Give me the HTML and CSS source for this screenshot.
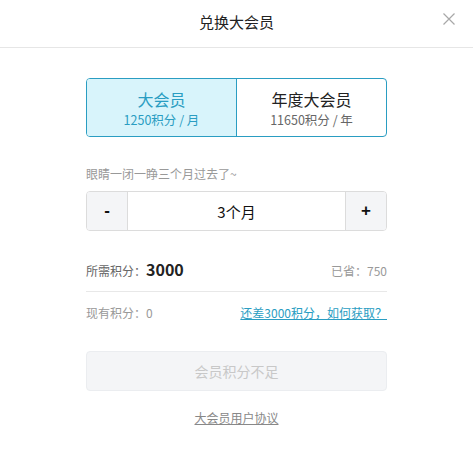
FILE: index.html
```html
<!DOCTYPE html>
<html lang="zh">
<head>
<meta charset="utf-8">
<link rel="stylesheet" href="styles.css">
</head>
<body>
<div class="dialog">
  <div class="header">
    <div class="title">兑换大会员</div>
    <svg class="close" width="12" height="12" viewBox="0 0 12 12"><path d="M0.5 0.5L11.5 11.5M11.5 0.5L0.5 11.5" stroke="#a8a8a8" stroke-width="1.2" fill="none"/></svg>
  </div>
  <div class="content">
    <div class="tabs">
      <div class="tab active">
        <div class="tab-name">大会员</div>
        <div class="tab-price">1250积分 / 月</div>
      </div>
      <div class="tab">
        <div class="tab-name">年度大会员</div>
        <div class="tab-price">11650积分 / 年</div>
      </div>
    </div>
    <div class="hint">眼睛一闭一睁三个月过去了~</div>
    <div class="stepper">
      <div class="step-btn">-</div>
      <div class="step-value">3个月</div>
      <div class="step-btn">+</div>
    </div>
    <div class="row need">
      <div class="need-label">所需积分：<span class="need-num">3000</span></div>
      <div class="saved">已省：750</div>
    </div>
    <div class="row have">
      <div class="have-label">现有积分：0</div>
      <a class="get-link">还差3000积分，如何获取？</a>
    </div>
    <div class="submit">会员积分不足</div>
    <div class="agreement"><a>大会员用户协议</a></div>
  </div>
</div>
</body>
</html>
```
FILE: styles.css
```css
html, body {
  margin: 0;
  padding: 0;
  background: #fff;
}
body {
  font-family: "Noto Sans CJK SC", "Liberation Sans", sans-serif;
  color: #222;
}
.dialog {
  width: 473px;
  height: 455px;
  position: relative;
}
.header {
  height: 47px;
  border-bottom: 1px solid #e6e6e6;
  display: flex;
  align-items: center;
  justify-content: center;
  position: relative;
}
.title {
  font-size: 15px;
  color: #222;
  line-height: 20px;
  margin-top: -4px;
}
.close {
  position: absolute;
  right: 18px;
  top: 13px;
}
.content {
  padding: 30px 86px 0;
}
.tabs {
  display: flex;
  height: 57px;
  border: 1px solid #2a9dc2;
  border-radius: 4px;
  overflow: hidden;
}
.tab {
  flex: 1;
  display: flex;
  flex-direction: column;
  align-items: center;
  justify-content: center;
}
.tab + .tab {
  border-left: 1px solid #2a9dc2;
}
.tab.active {
  background: #d8f4fb;
}
.tab-name {
  font-size: 16px;
  line-height: 22px;
  color: #222;
}
.tab-price {
  font-size: 12.5px;
  line-height: 17px;
  color: #666;
  margin-top: 1px;
}
.tab.active .tab-name,
.tab.active .tab-price {
  color: #2a9dc2;
}
.hint {
  margin-top: 28px;
  font-size: 12px;
  line-height: 18px;
  color: #999;
}
.stepper {
  margin-top: 8px;
  display: flex;
  height: 38px;
  border: 1px solid #dcdcdc;
  border-radius: 4px;
  overflow: hidden;
}
.step-btn {
  width: 40px;
  background: #f4f5f7;
  display: flex;
  align-items: center;
  justify-content: center;
  font-family: "Liberation Sans", sans-serif;
  font-weight: bold;
  font-size: 17px;
  color: #111;
}
.step-value {
  flex: 1;
  border-left: 1px solid #dcdcdc;
  border-right: 1px solid #dcdcdc;
  display: flex;
  align-items: center;
  justify-content: center;
  font-size: 15px;
  color: #111;
}
.row {
  display: flex;
  justify-content: space-between;
  align-items: baseline;
}
.need {
  margin-top: 26px;
  padding-bottom: 10px;
  border-bottom: 1px solid #e8e8e8;
}
.need-label {
  font-size: 12px;
  color: #666;
}
.need-num {
  font-size: 16px;
  font-weight: bold;
  color: #222;
}
.saved {
  font-size: 12px;
  color: #999;
}
.have {
  margin-top: 12px;
  font-size: 12px;
}
.have-label {
  color: #999;
}
.get-link {
  color: #2a9dc2;
  text-decoration: underline;
}
.submit {
  margin-top: 30px;
  height: 38px;
  border: 1px solid #ebedf0;
  border-radius: 4px;
  background: #f4f5f7;
  display: flex;
  align-items: center;
  justify-content: center;
  font-size: 14px;
  color: #c8c8c8;
}
.agreement {
  margin-top: 18px;
  text-align: center;
  font-size: 12px;
}
.agreement a {
  color: #888;
  text-decoration: underline;
}
```
